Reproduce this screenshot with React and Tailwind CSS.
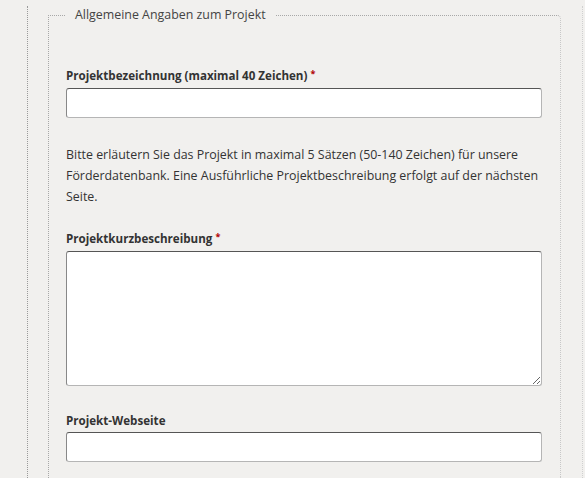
export default function App() {
  const labelClass =
    "block text-[11.6px] leading-[16px] font-bold text-[#333] mb-[3px]";
  const inputClass =
    "block w-[476px] h-[30px] rounded-[3px] border border-[#b5b5b5] border-t-[#555] border-l-[#888] bg-white px-2 text-[12px] outline-none";
  const star = (
    <span className="relative -top-[3px] text-[9px] text-[#b00000]">*</span>
  );

  return (
    <div
      className="w-[585px] h-[478px] overflow-hidden bg-[#f1f0ee] pl-[27px] text-[#333]"
      style={{ fontFamily: '"Open Sans", "Noto Sans", sans-serif' }}
    >
      <div className="h-full w-[556px] border-l border-dotted border-l-[#9a9a9a] border-r border-r-[#d0d0d0] pl-[20px]">
        <fieldset className="mt-[6px] w-[513px] rounded-tr-[4px] border border-dotted border-[#a8a8a8] border-r-solid border-r-[#c8c8c8] border-b-0 pl-[17px] pb-4">
          <legend className="px-[9px] text-[12.4px] leading-[18px] text-[#444]">
            Allgemeine Angaben zum Projekt
          </legend>

          <div className="pt-[44px]">
            <label className={labelClass}>
              Projektbezeichnung (maximal 40 Zeichen) {star}
            </label>
            <input type="text" className={inputClass} />
          </div>

          <p className="mt-[26px] w-[480px] text-[12.4px] leading-[21px] text-[#333]">
            Bitte erläutern Sie das Projekt in maximal 5 Sätzen (50-140 Zeichen)
            für unsere Förderdatenbank. Eine Ausführliche Projektbeschreibung
            erfolgt auf der nächsten Seite.
          </p>

          <div className="mt-[24px]">
            <label className={labelClass}>
              Projektkurzbeschreibung {star}
            </label>
            <textarea className="block w-[476px] h-[135px] rounded-[3px] border border-[#b5b5b5] border-t-[#555] border-l-[#888] bg-white px-2 py-1 text-[12px] outline-none" />
          </div>

          <div className="mt-[27px]">
            <label className={labelClass}>Projekt-Webseite</label>
            <input type="text" className={inputClass} />
          </div>
        </fieldset>
      </div>
    </div>
  );
}
